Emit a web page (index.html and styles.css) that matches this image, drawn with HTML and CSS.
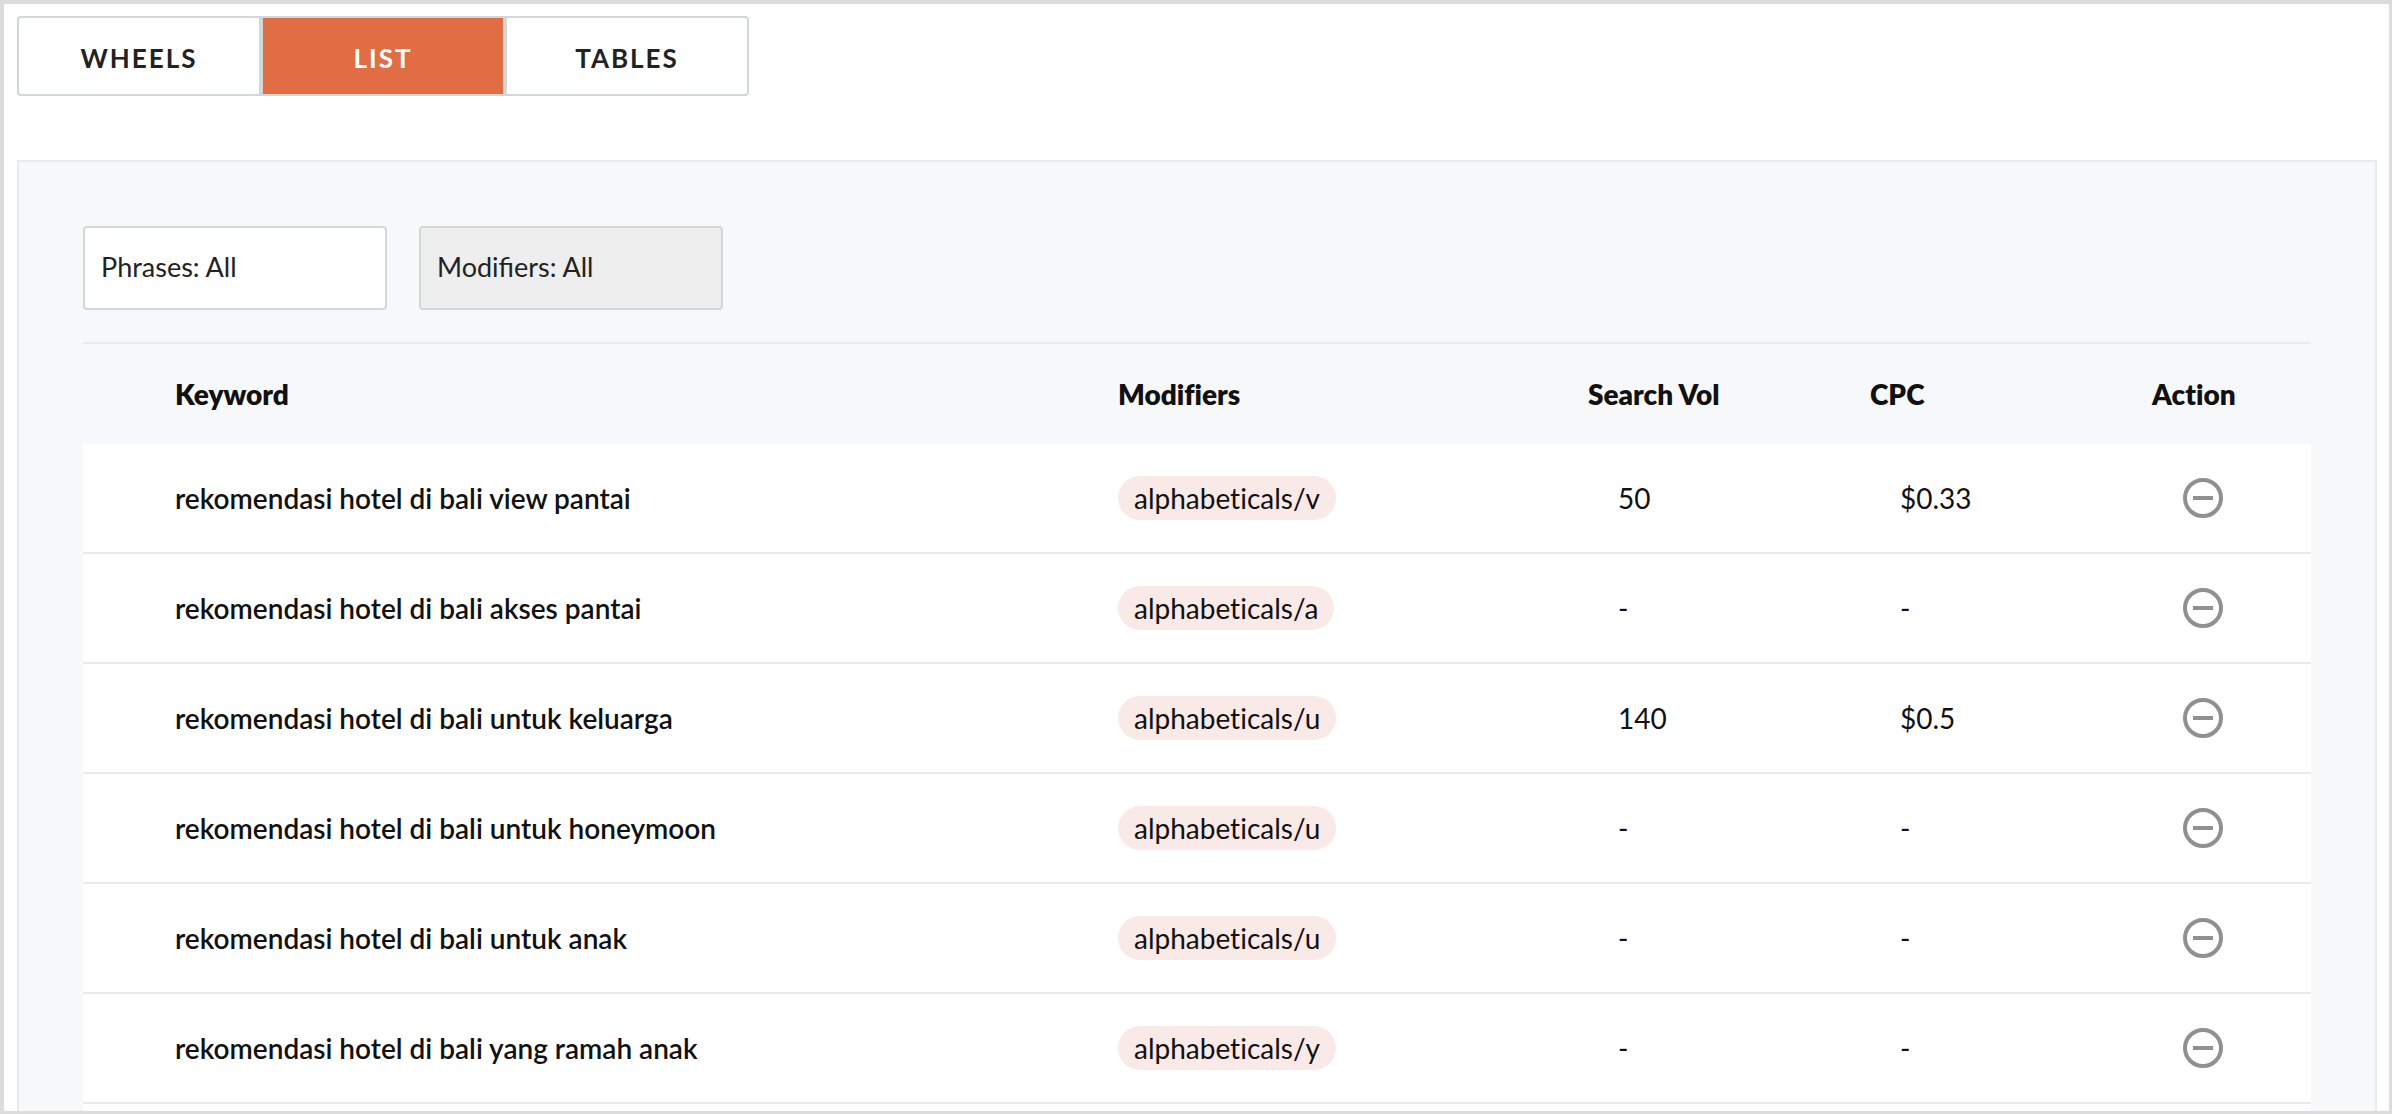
FILE: index.html
```html
<!DOCTYPE html>
<html lang="en">
<head>
  <meta charset="utf-8">
  <meta name="viewport" content="width=device-width, initial-scale=1">
  <title>Keyword list</title>
  <link rel="stylesheet" href="styles.css">
</head>
<body>
  <svg class="sprite" aria-hidden="true">
    <symbol id="icon-minus" viewBox="0 0 40 40">
      <circle cx="20" cy="20" r="18" fill="none" stroke="currentColor" stroke-width="4"/>
      <path d="M10 20h20" stroke="currentColor" stroke-width="4"/>
    </symbol>
  </svg>

  <main class="page">
    <nav class="tabs" aria-label="View">
      <button class="tab" type="button">WHEELS</button>
      <button class="tab tab-active" type="button" aria-pressed="true">LIST</button>
      <button class="tab" type="button">TABLES</button>
    </nav>

    <section class="panel">
      <form class="filters">
        <select class="filter" aria-label="Phrases">
          <option>Phrases: All</option>
        </select>
        <select class="filter" aria-label="Modifiers" disabled>
          <option>Modifiers: All</option>
        </select>
      </form>

      <div class="results">
        <table class="keywords">
          <colgroup>
            <col>
            <col class="col-modifiers">
            <col class="col-number">
            <col class="col-number">
            <col class="col-action">
          </colgroup>
          <thead>
            <tr>
              <th scope="col">Keyword</th>
              <th scope="col">Modifiers</th>
              <th scope="col">Search Vol</th>
              <th scope="col">CPC</th>
              <th scope="col">Action</th>
            </tr>
          </thead>
          <tbody>
            <tr>
              <td class="phrase">rekomendasi hotel di bali view pantai</td>
              <td><span class="pill">alphabeticals/v</span></td>
              <td class="number">50</td>
              <td class="number">$0.33</td>
              <td class="action"><button class="remove" type="button" aria-label="Remove"><svg><use href="#icon-minus"/></svg></button></td>
            </tr>
            <tr>
              <td class="phrase">rekomendasi hotel di bali akses pantai</td>
              <td><span class="pill">alphabeticals/a</span></td>
              <td class="number">-</td>
              <td class="number">-</td>
              <td class="action"><button class="remove" type="button" aria-label="Remove"><svg><use href="#icon-minus"/></svg></button></td>
            </tr>
            <tr>
              <td class="phrase">rekomendasi hotel di bali untuk keluarga</td>
              <td><span class="pill">alphabeticals/u</span></td>
              <td class="number">140</td>
              <td class="number">$0.5</td>
              <td class="action"><button class="remove" type="button" aria-label="Remove"><svg><use href="#icon-minus"/></svg></button></td>
            </tr>
            <tr>
              <td class="phrase">rekomendasi hotel di bali untuk honeymoon</td>
              <td><span class="pill">alphabeticals/u</span></td>
              <td class="number">-</td>
              <td class="number">-</td>
              <td class="action"><button class="remove" type="button" aria-label="Remove"><svg><use href="#icon-minus"/></svg></button></td>
            </tr>
            <tr>
              <td class="phrase">rekomendasi hotel di bali untuk anak</td>
              <td><span class="pill">alphabeticals/u</span></td>
              <td class="number">-</td>
              <td class="number">-</td>
              <td class="action"><button class="remove" type="button" aria-label="Remove"><svg><use href="#icon-minus"/></svg></button></td>
            </tr>
            <tr>
              <td class="phrase">rekomendasi hotel di bali yang ramah anak</td>
              <td><span class="pill">alphabeticals/y</span></td>
              <td class="number">-</td>
              <td class="number">-</td>
              <td class="action"><button class="remove" type="button" aria-label="Remove"><svg><use href="#icon-minus"/></svg></button></td>
            </tr>
          </tbody>
        </table>
      </div>
    </section>
  </main>
</body>
</html>
```
FILE: styles.css
```css
* {
  box-sizing: border-box;
}

body {
  margin: 0;
  color: #111;
  font-family: Lato, "Liberation Sans", sans-serif;
  font-size: 28px;
  line-height: 36px;
  font-variant-ligatures: none;
}

button,
select {
  font-family: inherit;
}

.sprite {
  display: none;
}

.page {
  display: flex;
  flex-direction: column;
  min-height: 100vh;
  padding: 12px 12px 0 13px;
  border: solid #dcdcdc;
  border-width: 4px 3px 3px 4px;
  background: #fefefe;
}

.tabs {
  display: flex;
  margin-bottom: 64px;
}

.tab {
  width: 244px;
  height: 80px;
  padding: 4px 0 0;
  border: 2px solid #d0d8d8;
  background: #fff;
  color: #222;
  font-size: 26px;
  font-weight: 700;
  line-height: 32px;
  letter-spacing: 2px;
}

.tab:first-child {
  border-radius: 4px 0 0 4px;
}

.tab:last-child {
  border-radius: 0 4px 4px 0;
}

.tab-active {
  background: #e16d44;
  color: #fff;
}

.panel {
  display: flex;
  flex: 1;
  flex-direction: column;
  padding: 64px 64px 0;
  border: 2px solid #e8ebed;
  border-bottom: 0;
  background: #f7f8fa;
}

.filters {
  display: flex;
  gap: 32px;
  margin-bottom: 32px;
}

.filter {
  width: 304px;
  height: 84px;
  padding: 0 16px 4px;
  border: 2px solid #d0d8d8;
  border-radius: 4px;
  appearance: none;
  background: #fff;
  color: #222;
  font-size: 27px;
}

.filter:disabled {
  background: #eee;
  opacity: 1;
}

.results {
  flex: 1;
  background: #fff;
}

.keywords {
  width: 100%;
  border-collapse: separate;
  border-spacing: 0;
  table-layout: fixed;
}

.col-modifiers {
  width: 470px;
}

.col-number {
  width: 282px;
}

.col-action {
  width: 159px;
}

th {
  height: 102px;
  padding: 0;
  border-top: 2px solid #e8ebed;
  background: #f7f8fa;
  font-weight: 800;
  text-align: left;
}

td {
  height: 110px;
  padding: 0;
  border-bottom: 2px solid #e6eaea;
}

th:first-child,
.phrase {
  padding-left: 92px;
}

.phrase {
  font-weight: 600;
}

.pill {
  display: inline-block;
  padding: 4px 16px;
  border-radius: 22px;
  background: #f9e9e7;
  vertical-align: middle;
}

.number {
  padding-left: 30px;
}

.action {
  padding-left: 31px;
}

.remove {
  display: block;
  width: 40px;
  height: 40px;
  padding: 0;
  border: 0;
  background: none;
  color: #909090;
}

.remove svg {
  display: block;
  width: 40px;
  height: 40px;
}
```
